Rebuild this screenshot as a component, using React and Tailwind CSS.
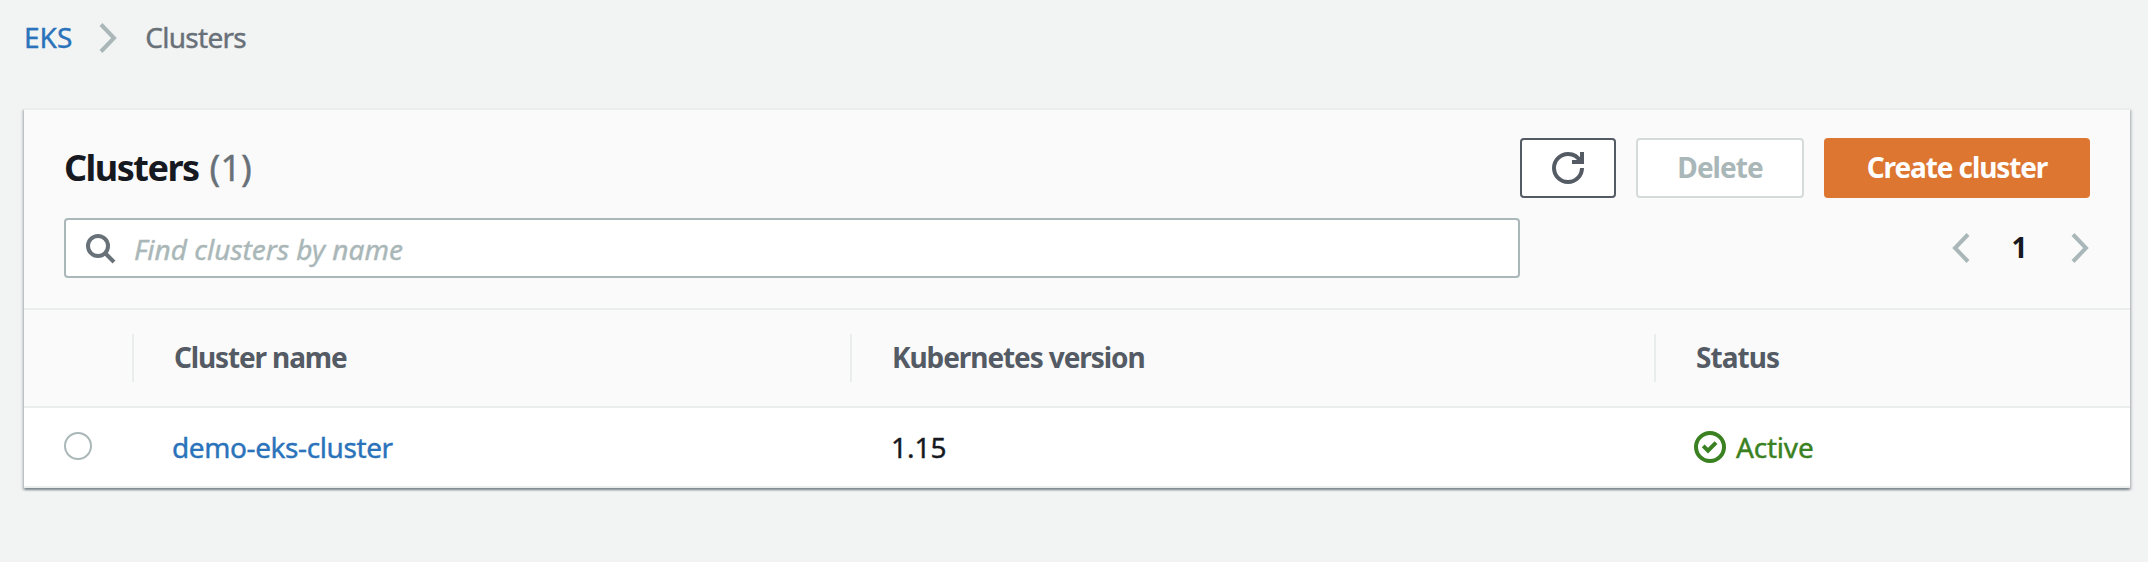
function Chevron({ className = "" }) {
  return (
    <svg viewBox="0 0 18 32" className={"h-8 w-[18px] shrink-0 text-[#aab7b8] " + className} fill="none" stroke="currentColor" strokeWidth="4">
      <path d="M2 2.5 15 16 2 29.5" />
    </svg>
  );
}

function SearchIcon() {
  return (
    <svg viewBox="0 0 32 32" className="h-8 w-8 shrink-0 text-[#687078]" fill="none" stroke="currentColor" strokeWidth="4">
      <circle cx="14" cy="14" r="10" />
      <path d="m21 21 9 9" />
    </svg>
  );
}

function RefreshIcon() {
  return (
    <svg viewBox="0 0 16 16" className="h-8 w-8" fill="none" stroke="currentColor" strokeWidth="2">
      <path d="M10 5h5V0" />
      <path d="M15 8c0 3.87-3.13 7-7 7s-7-3.13-7-7 3.13-7 7-7c2.79 0 5.2 1.63 6.3 4" />
    </svg>
  );
}

function ActiveIcon() {
  return (
    <svg viewBox="0 0 16 16" className="h-8 w-8 shrink-0" fill="none" stroke="currentColor" strokeWidth="2">
      <circle cx="8" cy="8" r="7" />
      <path d="M4.6 7.4 7 9.8l4-4" />
    </svg>
  );
}

function HeaderCell({ children, className = "" }) {
  return (
    <div className="flex items-center">
      <span className="h-12 w-[2px] bg-[#eaeded]" />
      <span className={"pb-[2px] pl-10 font-bold text-[#545b64] " + className}>{children}</span>
    </div>
  );
}

const columns = "grid grid-cols-[108px_718px_804px_1fr]";
const sturdy = "[-webkit-text-stroke:0.4px_currentColor]";

export default function App() {
  return (
    <div className="h-[562px] w-full bg-[#f2f3f3] pl-6 pr-[18px] font-['Noto_Sans',sans-serif] text-[28px] leading-10 text-[#16191f]">
      <nav className={"flex h-[108px] items-start pt-[18px] " + sturdy}>
        <a className="-mt-px text-[#2a73bb]">EKS</a>
        <Chevron className="ml-[27px] mt-1" />
        <span className="-mt-px ml-[28px] tracking-[-0.73px] text-[#687078]">Clusters</span>
      </nav>

      <section className="h-[380px] border-t-2 border-[#eaeded] bg-white shadow-[0_2px_2px_rgba(0,28,36,0.3),2px_2px_2px_rgba(0,28,36,0.15),-2px_2px_2px_rgba(0,28,36,0.15)]">
        <header className="flex h-[200px] flex-col gap-5 border-b-2 border-[#eaeded] bg-[#fafafa] px-10 pt-7">
          <div className="flex h-[60px] items-center gap-5">
            <h1 className="mr-auto text-[36px] leading-[48px]">
              <span className="font-bold tracking-[-1.5px]">Clusters</span>
              <span className={"ml-[11px] text-[#687078] " + sturdy}>(1)</span>
            </h1>
            <button aria-label="Refresh" className="flex h-[60px] w-24 items-center justify-center rounded-[4px] border-2 border-[#545b64] bg-white text-[#545b64]">
              <RefreshIcon />
            </button>
            <button className="h-[60px] w-[168px] rounded-[4px] border-2 border-[#d5dbdb] bg-white pb-[2px] font-bold tracking-[-0.98px] text-[#aab7b8]">Delete</button>
            <button className="h-[60px] w-[266px] rounded-[4px] bg-[#dd7631] pb-[2px] font-bold tracking-[-1.1px] text-white">Create cluster</button>
          </div>
          <div className="flex h-[60px] items-center justify-between">
            <label className="flex h-[60px] w-[1456px] items-center rounded-[4px] border-2 border-[#aab7b8] bg-white pl-[18px]">
              <SearchIcon />
              <span className={"ml-[18px] pt-[2px] italic text-[#aab7b8] " + sturdy}>Find clusters by name</span>
            </label>
            <div className="mr-px flex items-center">
              <Chevron className="rotate-180" />
              <span className="w-[101px] pb-[2px] pr-[2px] text-center font-bold">1</span>
              <Chevron />
            </div>
          </div>
        </header>

        <div className={columns + " h-[98px] border-b-2 border-[#eaeded] bg-[#fafafa]"}>
          <span />
          <HeaderCell className="tracking-[-1.14px]">Cluster name</HeaderCell>
          <HeaderCell className="tracking-[-1.09px]">Kubernetes version</HeaderCell>
          <HeaderCell className="tracking-[-0.94px]">Status</HeaderCell>
        </div>

        <div className={columns + " h-20 items-center border-b-2 border-[#eaeded] " + sturdy}>
          <span className="mb-[2px] ml-10 h-7 w-7 rounded-full border-2 border-[#aab7b8] bg-white" />
          <a className="pl-10 tracking-[-0.4px] text-[#2a73bb]">demo-eks-cluster</a>
          <span className="pl-[41px]">1.15</span>
          <span className="flex items-center gap-[10px] pl-10 tracking-[-0.2px] text-[#3a8121]">
            <ActiveIcon />
            Active
          </span>
        </div>
      </section>
    </div>
  );
}
